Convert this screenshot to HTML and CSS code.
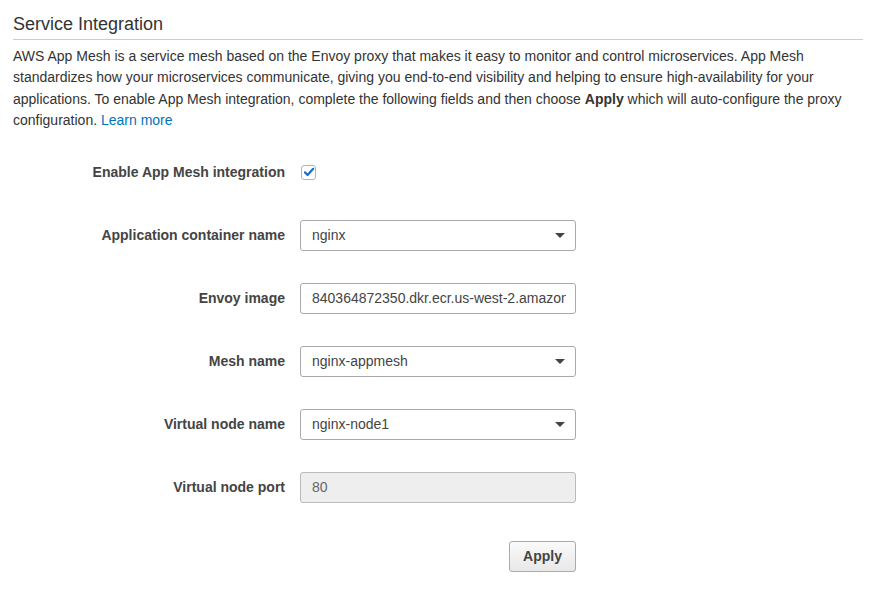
FILE: index.html
```html
<!DOCTYPE html>
<html>
<head>
<meta charset="utf-8">
<link rel="stylesheet" href="styles.css">
</head>
<body>
<div class="panel">
  <h2 class="title">Service Integration</h2>
  <p class="desc">AWS App Mesh is a service mesh based on the Envoy proxy that makes it easy to monitor and control microservices. App Mesh standardizes how your microservices communicate, giving you end-to-end visibility and helping to ensure high-availability for your applications. To enable App Mesh integration, complete the following fields and then choose <b>Apply</b> which will auto-configure the proxy configuration. <a class="link" href="#">Learn more</a></p>

  <div class="form">
    <label class="label">Enable App Mesh integration</label>
    <div class="field check-field">
      <span class="checkbox">
        <svg width="12" height="12" viewBox="0 0 12 12"><path d="M2 6.4 L4.6 9 L10.2 2.8" fill="none" stroke="#1a6fc4" stroke-width="2.2" stroke-linecap="round" stroke-linejoin="round"/></svg>
      </span>
    </div>

    <label class="label">Application container name</label>
    <div class="field select"><span class="value">nginx</span><span class="caret"></span></div>

    <label class="label">Envoy image</label>
    <div class="field"><input class="input" type="text" value="840364872350.dkr.ecr.us-west-2.amazonaws.com/aws-appmesh-envoy:v1.11.1.1-prod"></div>

    <label class="label">Mesh name</label>
    <div class="field select"><span class="value">nginx-appmesh</span><span class="caret"></span></div>

    <label class="label">Virtual node name</label>
    <div class="field select"><span class="value">nginx-node1</span><span class="caret"></span></div>

    <label class="label">Virtual node port</label>
    <div class="field"><input class="input disabled" type="text" value="80" disabled></div>
  </div>
  <div class="actions"><button class="btn">Apply</button></div>
</div>
</body>
</html>
```

FILE: styles.css
```css
* { box-sizing: border-box; }
html, body { margin: 0; padding: 0; background: #fff; }
body {
  font-family: "Liberation Sans", Arial, Helvetica, sans-serif;
  font-size: 14px;
  color: #444;
}
.panel {
  width: 850px;
  margin-left: 13px;
  padding-top: 13px;
}
.title {
  margin: 0;
  font-size: 18px;
  font-weight: normal;
  line-height: 22px;
  color: #333;
  padding-bottom: 4px;
  border-bottom: 1px solid #ccc;
}
.desc {
  margin: 6px 0 0;
  line-height: 21.4px;
  color: #333;
}
.desc b { color: #333; }
.link { color: #0073bb; text-decoration: none; }
.form {
  margin-top: 25px;
  display: grid;
  grid-template-columns: 272px 276px;
  grid-auto-rows: 31px;
  column-gap: 15px;
  row-gap: 32px;
}
.label {
  font-weight: bold;
  text-align: right;
  align-self: center;
  color: #444;
}
.field {
  height: 31px;
}
.check-field {
  display: flex;
  align-items: center;
  padding-left: 1px;
}
.checkbox {
  width: 15px;
  height: 15px;
  border: 1px solid #b4b4b4;
  border-radius: 3px;
  display: flex;
  align-items: center;
  justify-content: center;
  background: #fff;
}
.select {
  border: 1px solid #aaa;
  border-radius: 3px;
  display: flex;
  align-items: center;
  justify-content: space-between;
  padding: 0 10px 0 11px;
  background: #fff;
}
.value { color: #444; }
.caret {
  width: 0;
  height: 0;
  border-left: 5px solid transparent;
  border-right: 5px solid transparent;
  border-top: 5px solid #444;
  margin-top: 1px;
}
.input {
  width: 100%;
  height: 31px;
  border: 1px solid #aaa;
  border-radius: 3px;
  padding: 0 9px 0 11px;
  font-family: inherit;
  font-size: 14px;
  color: #444;
  background: #fff;
  outline: none;
}
.input.disabled {
  background: #eee;
  color: #666;
  border-color: #bbb;
}
.actions {
  width: 563px;
  display: flex;
  justify-content: flex-end;
  margin-top: 38px;
}
.btn {
  width: 67px;
  height: 31px;
  border: 1px solid #aaa;
  border-radius: 3px;
  background: linear-gradient(#fafafa, #e8e8e8);
  font-family: inherit;
  font-size: 14px;
  font-weight: bold;
  color: #444;
  padding: 0;
}
```
